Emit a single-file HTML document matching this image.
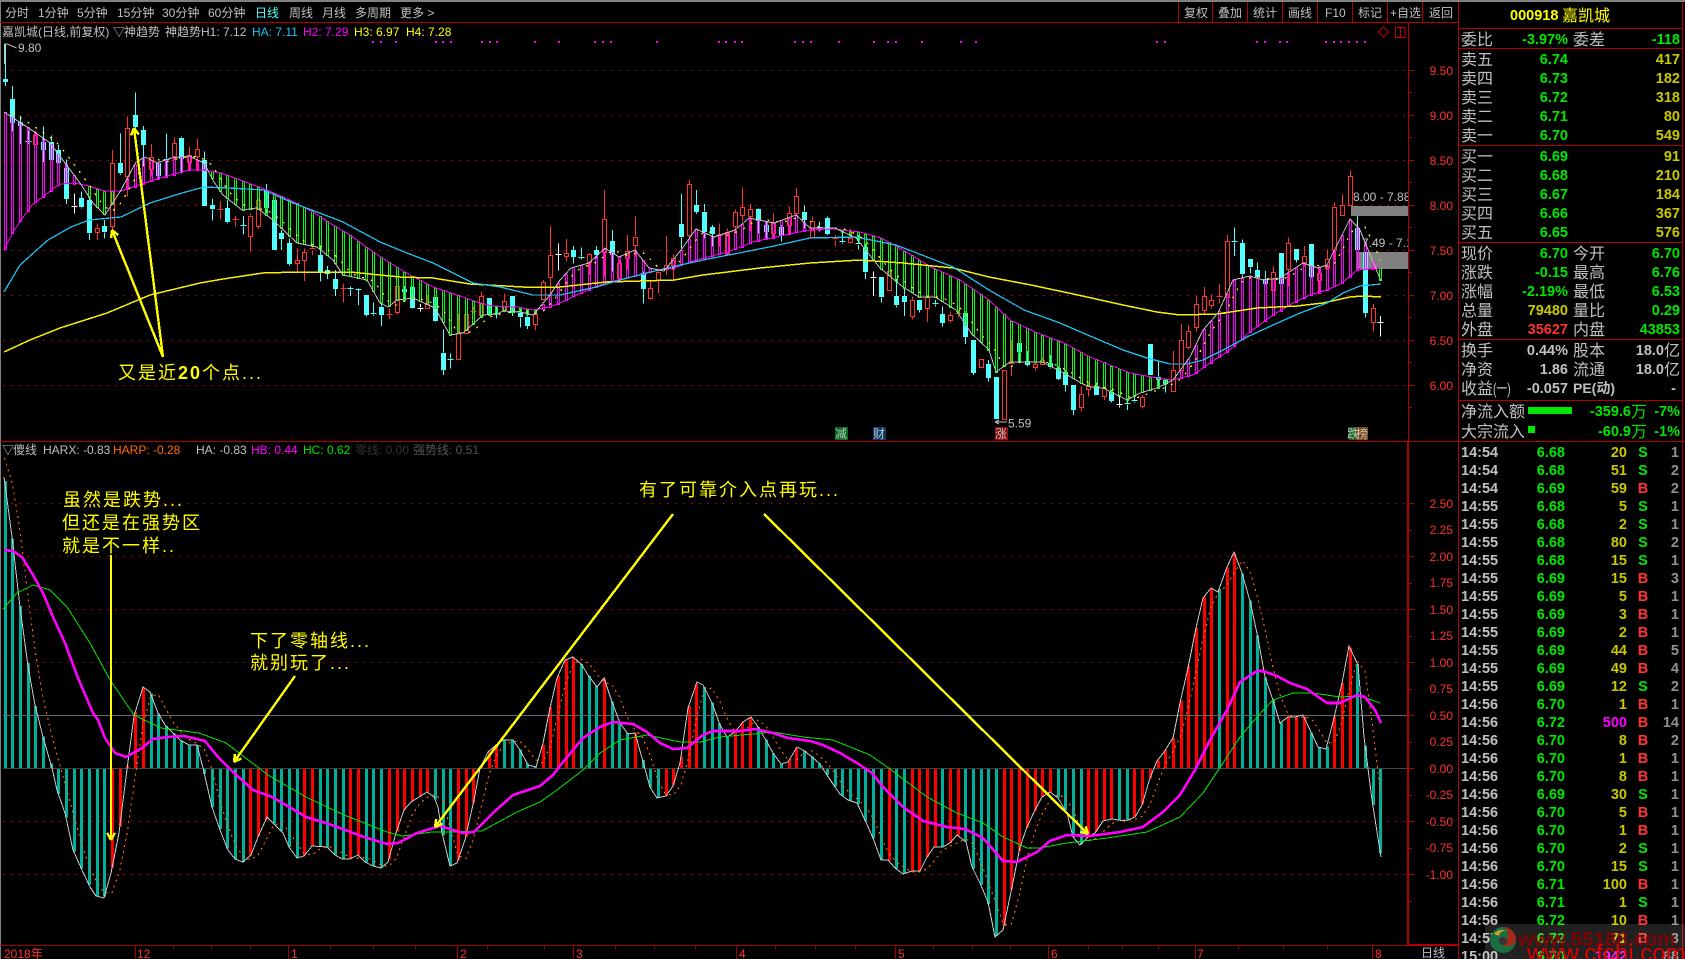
<!DOCTYPE html>
<html lang="zh-CN">
<head>
<meta charset="utf-8">
<title>嘉凯城 000918</title>
<style>
html,body{margin:0;padding:0;background:#000;width:1685px;height:959px;overflow:hidden}
svg{position:absolute;left:0;top:0;display:block}
text{font-family:"Liberation Sans","WenQuanYi Zen Hei","Noto Sans CJK SC",sans-serif;font-size:12px;fill:#c0c0c0}
.ax{fill:#ff3232;text-anchor:end}
.l{font-size:16px}
.n{font-size:14.5px;font-weight:bold;text-anchor:end}
.g{fill:#00e600}.y{fill:#c8c800}.r{fill:#ff3232}.w{fill:#c0c0c0}
.t{font-size:14.5px;font-weight:bold}
.p{font-size:14.5px;font-weight:bold;text-anchor:end;fill:#00e600}
.v{font-size:14.5px;font-weight:bold;text-anchor:end;fill:#c8c800}
.s{font-size:14.5px;font-weight:bold;text-anchor:middle;fill:#00e600}
.b{font-size:14.5px;font-weight:bold;text-anchor:middle;fill:#ff3232}
.c{font-size:14.5px;font-weight:bold;text-anchor:end;fill:#909090}
.a{font-size:18px;letter-spacing:2px;fill:#ffff00}
</style>
</head>
<body>
<svg xmlns="http://www.w3.org/2000/svg" width="1685" height="959" viewBox="0 0 1685 959">
<rect width="1685" height="959" fill="#000"/>
<g id="grid" shape-rendering="crispEdges"></g>
<g shape-rendering="crispEdges">
<rect x="1351" y="206" width="57" height="10" fill="#808080"/>
<rect x="1357" y="252" width="51" height="17" fill="#808080"/>
</g>
<g id="candles" shape-rendering="crispEdges"></g>
<g id="hollow" shape-rendering="crispEdges"></g>
<g id="ibars" shape-rendering="crispEdges"></g>
<g id="lines" fill="none" shape-rendering="crispEdges"></g>

<!-- frame -->
<g shape-rendering="crispEdges">
<rect x="0" y="0" width="1685" height="2" fill="#808080"/>
<rect x="0" y="0" width="1" height="959" fill="#808080"/>
<rect x="0" y="22" width="1458" height="1" fill="#b00000"/>
<rect x="0" y="441" width="1685" height="1" fill="#b00000"/>
<rect x="1408" y="22" width="1" height="923" fill="#b00000"/>
<rect x="1407" y="441" width="2" height="504" fill="#b00000"/>
<rect x="1458" y="2" width="1" height="957" fill="#b00000"/>
<rect x="1682" y="2" width="1" height="957" fill="#b00000"/>
<rect x="0" y="945" width="1408" height="1" fill="#a00000"/>
<rect x="1407" y="944" width="51" height="2" fill="#b00000"/>
<rect x="1458" y="28" width="225" height="1" fill="#b00000"/>
<rect x="1458" y="48" width="225" height="1" fill="#b00000"/>
<rect x="1458" y="145" width="225" height="1" fill="#b00000"/>
<rect x="1458" y="242" width="225" height="1" fill="#b00000"/>
<rect x="1458" y="339" width="225" height="1" fill="#b00000"/>
<rect x="1458" y="400" width="225" height="1" fill="#b00000"/>
<rect x="1178" y="2" width="1" height="20" fill="#b00000"/>
<rect x="1212" y="2" width="1" height="20" fill="#b00000"/>
<rect x="1247" y="2" width="1" height="20" fill="#b00000"/>
<rect x="1282" y="2" width="1" height="20" fill="#b00000"/>
<rect x="1317" y="2" width="1" height="20" fill="#b00000"/>
<rect x="1352" y="2" width="1" height="20" fill="#b00000"/>
<rect x="1387" y="2" width="1" height="20" fill="#b00000"/>
<rect x="1422" y="2" width="1" height="20" fill="#b00000"/>
<rect x="1528" y="407" width="44" height="7" fill="#00e600"/>
<rect x="1528" y="426" width="7" height="7" fill="#00e600"/>
</g>

<!-- top toolbar -->
<text x="5" y="17">分时</text>
<text x="38" y="17">1分钟</text>
<text x="77" y="17">5分钟</text>
<text x="117" y="17">15分钟</text>
<text x="162" y="17">30分钟</text>
<text x="208" y="17">60分钟</text>
<text x="255" y="17" style="fill:#54ffff">日线</text>
<text x="289" y="17">周线</text>
<text x="322" y="17">月线</text>
<text x="355" y="17">多周期</text>
<text x="400" y="17">更多 &gt;</text>
<text x="1184" y="17">复权</text>
<text x="1218" y="17">叠加</text>
<text x="1253" y="17">统计</text>
<text x="1288" y="17">画线</text>
<text x="1325" y="17">F10</text>
<text x="1358" y="17">标记</text>
<text x="1390" y="17">+自选</text>
<text x="1429" y="17">返回</text>

<!-- price legend -->
<text x="2" y="36">嘉凯城(日线,前复权)</text>
<text x="113" y="36">▽</text>
<text x="124" y="36">神趋势</text>
<text x="165" y="36">神趋势H1: 7.12</text>
<text x="252" y="36" style="fill:#20c0f0">HA: 7.11</text>
<text x="303" y="36" style="fill:#ff00ff">H2: 7.29</text>
<text x="354" y="36" style="fill:#ffff00">H3: 6.97</text>
<text x="406" y="36" style="fill:#ffff00">H4: 7.28</text>
<path d="M1383.5 27l5 5-5 5-5-5z" fill="none" stroke="#c80000"/>
<path d="M1395.5 27.5h9.5v10h-9.5zM1400.5 27.5v10" fill="none" stroke="#c80000"/>

<text x="18" y="52">9.80</text>
<path d="M4.500 44v20M4.500 44h3l9 4" fill="none" stroke="#c0c0c0" stroke-width="1"/>
<text x="1008" y="427.500">5.59</text>
<path d="M995 422h12M995 422l4-2M995 422l4 2" fill="none" stroke="#c0c0c0"/>
<svg x="1353" y="190" width="55" height="15"><text x="0" y="11">8.00 - 7.88</text></svg>
<svg x="1362" y="236" width="46" height="15"><text x="0" y="11">7.49 - 7.12</text></svg>

<!-- flags -->
<g shape-rendering="crispEdges">
<rect x="835" y="427" width="13" height="13" fill="#006a1e"/>
<rect x="873" y="427" width="13" height="13" fill="#0a3a6a"/>
<rect x="995" y="427" width="13" height="13" fill="#8b0f0f"/>
<rect x="1349" y="427" width="7" height="13" fill="#0a6a10"/>
<rect x="1356" y="427" width="12" height="13" fill="#7a4410"/>
</g>
<text x="835" y="438">减</text>
<text x="873" y="438">财</text>
<text x="995" y="438">涨</text>
<text x="1347" y="438" style="letter-spacing:-3px">跌榜</text>

<!-- axis -->
<text class="ax" x="1453" y="75">9.50</text>
<text class="ax" x="1453" y="120">9.00</text>
<text class="ax" x="1453" y="165">8.50</text>
<text class="ax" x="1453" y="210">8.00</text>
<text class="ax" x="1453" y="255">7.50</text>
<text class="ax" x="1453" y="300">7.00</text>
<text class="ax" x="1453" y="345">6.50</text>
<text class="ax" x="1453" y="390">6.00</text>
<text class="ax" x="1453" y="508">2.50</text>
<text class="ax" x="1453" y="534">2.25</text>
<text class="ax" x="1453" y="561">2.00</text>
<text class="ax" x="1453" y="587">1.75</text>
<text class="ax" x="1453" y="614">1.50</text>
<text class="ax" x="1453" y="640">1.25</text>
<text class="ax" x="1453" y="667">1.00</text>
<text class="ax" x="1453" y="693">0.75</text>
<text class="ax" x="1453" y="720">0.50</text>
<text class="ax" x="1453" y="746">0.25</text>
<text class="ax" x="1453" y="773">0.00</text>
<text class="ax" x="1453" y="799">-0.25</text>
<text class="ax" x="1453" y="826">-0.50</text>
<text class="ax" x="1453" y="852">-0.75</text>
<text class="ax" x="1453" y="879">-1.00</text>
<text x="1421" y="957">日线</text>

<!-- indicator legend -->
<text x="2" y="454">▽</text>
<text x="13" y="454">傻线</text>
<text x="43" y="454">HARX: -0.83</text>
<text x="113" y="454" style="fill:#ff6a00">HARP: -0.28</text>
<text x="196" y="454">HA: -0.83</text>
<text x="251" y="454" style="fill:#ff00ff">HB: 0.44</text>
<text x="303" y="454" style="fill:#00e600">HC: 0.62</text>
<text x="355" y="454" style="fill:#333">零线: 0.00</text>
<text x="413" y="454" style="fill:#555">强势线: 0.51</text>

<!-- x axis dates -->
<text class="ax" style="text-anchor:start" x="4" y="958">2018年</text>
<text class="ax" style="text-anchor:start" x="137" y="958">12</text>
<text class="ax" style="text-anchor:start" x="291" y="958">1</text>
<text class="ax" style="text-anchor:start" x="460" y="958">2</text>
<text class="ax" style="text-anchor:start" x="576" y="958">3</text>
<text class="ax" style="text-anchor:start" x="739" y="958">4</text>
<text class="ax" style="text-anchor:start" x="898" y="958">5</text>
<text class="ax" style="text-anchor:start" x="1051" y="958">6</text>
<text class="ax" style="text-anchor:start" x="1197" y="958">7</text>
<text class="ax" style="text-anchor:start" x="1375" y="958">8</text>

<!-- annotations -->
<g id="arrows" fill="none" stroke="#ffff00" stroke-width="2.4" shape-rendering="crispEdges"></g>
<text class="a" x="63" y="506">虽然是跌势...</text>
<text class="a" x="62" y="529">但还是在强势区</text>
<text class="a" x="62" y="552">就是不一样..</text>
<text class="a" x="250" y="647">下了零轴线...</text>
<text class="a" x="250" y="669">就别玩了...</text>
<text class="a" x="639" y="496">有了可靠介入点再玩...</text>
<text class="a" x="118" y="379">又是近<tspan font-weight="bold" font-family="Liberation Sans">20</tspan>个点...</text>

<!-- right panel -->
<text x="1510" y="20" style="font-size:14.500px;font-weight:bold;fill:#ffff00">000918</text>
<text x="1562" y="21" style="font-size:16px;fill:#ffff00">嘉凯城</text>

<text class="l" x="1461" y="45">委比</text><text class="n g" x="1568" y="44">-3.97%</text><text class="l" x="1573" y="45">委差</text><text class="n g" x="1680" y="44">-118</text>

<text class="l" x="1461" y="65">卖五</text><text class="n g" x="1568" y="64">6.74</text><text class="n y" x="1680" y="64">417</text>
<text class="l" x="1461" y="84">卖四</text><text class="n g" x="1568" y="83">6.73</text><text class="n y" x="1680" y="83">182</text>
<text class="l" x="1461" y="103">卖三</text><text class="n g" x="1568" y="102">6.72</text><text class="n y" x="1680" y="102">318</text>
<text class="l" x="1461" y="122">卖二</text><text class="n g" x="1568" y="121">6.71</text><text class="n y" x="1680" y="121">80</text>
<text class="l" x="1461" y="141">卖一</text><text class="n g" x="1568" y="140">6.70</text><text class="n y" x="1680" y="140">549</text>

<text class="l" x="1461" y="162">买一</text><text class="n g" x="1568" y="161">6.69</text><text class="n y" x="1680" y="161">91</text>
<text class="l" x="1461" y="181">买二</text><text class="n g" x="1568" y="180">6.68</text><text class="n y" x="1680" y="180">210</text>
<text class="l" x="1461" y="200">买三</text><text class="n g" x="1568" y="199">6.67</text><text class="n y" x="1680" y="199">184</text>
<text class="l" x="1461" y="219">买四</text><text class="n g" x="1568" y="218">6.66</text><text class="n y" x="1680" y="218">367</text>
<text class="l" x="1461" y="238">买五</text><text class="n g" x="1568" y="237">6.65</text><text class="n y" x="1680" y="237">576</text>

<text class="l" x="1461" y="259">现价</text><text class="n g" x="1568" y="258">6.70</text><text class="l" x="1573" y="259">今开</text><text class="n g" x="1680" y="258">6.70</text>
<text class="l" x="1461" y="278">涨跌</text><text class="n g" x="1568" y="277">-0.15</text><text class="l" x="1573" y="278">最高</text><text class="n g" x="1680" y="277">6.76</text>
<text class="l" x="1461" y="297">涨幅</text><text class="n g" x="1568" y="296">-2.19%</text><text class="l" x="1573" y="297">最低</text><text class="n g" x="1680" y="296">6.53</text>
<text class="l" x="1461" y="316">总量</text><text class="n y" x="1568" y="315">79480</text><text class="l" x="1573" y="316">量比</text><text class="n g" x="1680" y="315">0.29</text>
<text class="l" x="1461" y="335">外盘</text><text class="n r" x="1568" y="334">35627</text><text class="l" x="1573" y="335">内盘</text><text class="n g" x="1680" y="334">43853</text>

<text class="l" x="1461" y="356">换手</text><text class="n w" x="1568" y="355">0.44%</text><text class="l" x="1573" y="356">股本</text><text class="n w" x="1664" y="355">18.0</text><text class="l" x="1664" y="356">亿</text>
<text class="l" x="1461" y="375">净资</text><text class="n w" x="1568" y="374">1.86</text><text class="l" x="1573" y="375">流通</text><text class="n w" x="1664" y="374">18.0</text><text class="l" x="1664" y="375">亿</text>
<text class="l" x="1461" y="394">收益</text><text class="l" transform="translate(1493,394) scale(.66,1)">(一)</text><text class="n w" x="1568" y="393">-0.057</text><text x="1573" y="393" style="font-size:14px;font-weight:bold">PE(动)</text><text class="n w" x="1676" y="393">-</text>

<text class="l" x="1461" y="417">净流入额</text><text class="n g" x="1631" y="416">-359.6</text><text class="l" x="1631" y="417" style="fill:#00e600">万</text><text class="n g" x="1680" y="416">-7%</text>
<text class="l" x="1461" y="437">大宗流入</text><text class="n g" x="1631" y="436">-60.9</text><text class="l" x="1631" y="437" style="fill:#00e600">万</text><text class="n g" x="1680" y="436">-1%</text>

<!-- ticks -->
<text class="t" x="1461" y="457">14:54</text><text class="p" x="1565" y="457">6.68</text><text class="v" x="1627" y="457">20</text><text class="s" x="1643" y="457">S</text><text class="c" x="1679" y="457">1</text>
<text class="t" x="1461" y="475">14:54</text><text class="p" x="1565" y="475">6.68</text><text class="v" x="1627" y="475">51</text><text class="s" x="1643" y="475">S</text><text class="c" x="1679" y="475">2</text>
<text class="t" x="1461" y="493">14:54</text><text class="p" x="1565" y="493">6.69</text><text class="v" x="1627" y="493">59</text><text class="b" x="1643" y="493">B</text><text class="c" x="1679" y="493">2</text>
<text class="t" x="1461" y="511">14:55</text><text class="p" x="1565" y="511">6.68</text><text class="v" x="1627" y="511">5</text><text class="s" x="1643" y="511">S</text><text class="c" x="1679" y="511">1</text>
<text class="t" x="1461" y="529">14:55</text><text class="p" x="1565" y="529">6.68</text><text class="v" x="1627" y="529">2</text><text class="s" x="1643" y="529">S</text><text class="c" x="1679" y="529">1</text>
<text class="t" x="1461" y="547">14:55</text><text class="p" x="1565" y="547">6.68</text><text class="v" x="1627" y="547">80</text><text class="s" x="1643" y="547">S</text><text class="c" x="1679" y="547">2</text>
<text class="t" x="1461" y="565">14:55</text><text class="p" x="1565" y="565">6.68</text><text class="v" x="1627" y="565">15</text><text class="s" x="1643" y="565">S</text><text class="c" x="1679" y="565">1</text>
<text class="t" x="1461" y="583">14:55</text><text class="p" x="1565" y="583">6.69</text><text class="v" x="1627" y="583">15</text><text class="b" x="1643" y="583">B</text><text class="c" x="1679" y="583">3</text>
<text class="t" x="1461" y="601">14:55</text><text class="p" x="1565" y="601">6.69</text><text class="v" x="1627" y="601">5</text><text class="b" x="1643" y="601">B</text><text class="c" x="1679" y="601">1</text>
<text class="t" x="1461" y="619">14:55</text><text class="p" x="1565" y="619">6.69</text><text class="v" x="1627" y="619">3</text><text class="b" x="1643" y="619">B</text><text class="c" x="1679" y="619">1</text>
<text class="t" x="1461" y="637">14:55</text><text class="p" x="1565" y="637">6.69</text><text class="v" x="1627" y="637">2</text><text class="b" x="1643" y="637">B</text><text class="c" x="1679" y="637">1</text>
<text class="t" x="1461" y="655">14:55</text><text class="p" x="1565" y="655">6.69</text><text class="v" x="1627" y="655">44</text><text class="b" x="1643" y="655">B</text><text class="c" x="1679" y="655">5</text>
<text class="t" x="1461" y="673">14:55</text><text class="p" x="1565" y="673">6.69</text><text class="v" x="1627" y="673">49</text><text class="b" x="1643" y="673">B</text><text class="c" x="1679" y="673">4</text>
<text class="t" x="1461" y="691">14:55</text><text class="p" x="1565" y="691">6.69</text><text class="v" x="1627" y="691">12</text><text class="s" x="1643" y="691">S</text><text class="c" x="1679" y="691">2</text>
<text class="t" x="1461" y="709">14:56</text><text class="p" x="1565" y="709">6.70</text><text class="v" x="1627" y="709">1</text><text class="b" x="1643" y="709">B</text><text class="c" x="1679" y="709">1</text>
<text class="t" x="1461" y="727">14:56</text><text class="p" x="1565" y="727">6.72</text><text class="v" x="1627" y="727" style="fill:#ff00ff">500</text><text class="b" x="1643" y="727">B</text><text class="c" x="1679" y="727">14</text>
<text class="t" x="1461" y="745">14:56</text><text class="p" x="1565" y="745">6.70</text><text class="v" x="1627" y="745">8</text><text class="b" x="1643" y="745">B</text><text class="c" x="1679" y="745">2</text>
<text class="t" x="1461" y="763">14:56</text><text class="p" x="1565" y="763">6.70</text><text class="v" x="1627" y="763">1</text><text class="b" x="1643" y="763">B</text><text class="c" x="1679" y="763">1</text>
<text class="t" x="1461" y="781">14:56</text><text class="p" x="1565" y="781">6.70</text><text class="v" x="1627" y="781">8</text><text class="b" x="1643" y="781">B</text><text class="c" x="1679" y="781">1</text>
<text class="t" x="1461" y="799">14:56</text><text class="p" x="1565" y="799">6.69</text><text class="v" x="1627" y="799">30</text><text class="s" x="1643" y="799">S</text><text class="c" x="1679" y="799">1</text>
<text class="t" x="1461" y="817">14:56</text><text class="p" x="1565" y="817">6.70</text><text class="v" x="1627" y="817">5</text><text class="b" x="1643" y="817">B</text><text class="c" x="1679" y="817">1</text>
<text class="t" x="1461" y="835">14:56</text><text class="p" x="1565" y="835">6.70</text><text class="v" x="1627" y="835">1</text><text class="b" x="1643" y="835">B</text><text class="c" x="1679" y="835">1</text>
<text class="t" x="1461" y="853">14:56</text><text class="p" x="1565" y="853">6.70</text><text class="v" x="1627" y="853">2</text><text class="s" x="1643" y="853">S</text><text class="c" x="1679" y="853">1</text>
<text class="t" x="1461" y="871">14:56</text><text class="p" x="1565" y="871">6.70</text><text class="v" x="1627" y="871">15</text><text class="s" x="1643" y="871">S</text><text class="c" x="1679" y="871">1</text>
<text class="t" x="1461" y="889">14:56</text><text class="p" x="1565" y="889">6.71</text><text class="v" x="1627" y="889">100</text><text class="b" x="1643" y="889">B</text><text class="c" x="1679" y="889">1</text>
<text class="t" x="1461" y="907">14:56</text><text class="p" x="1565" y="907">6.71</text><text class="v" x="1627" y="907">1</text><text class="s" x="1643" y="907">S</text><text class="c" x="1679" y="907">1</text>
<text class="t" x="1461" y="925">14:56</text><text class="p" x="1565" y="925">6.72</text><text class="v" x="1627" y="925">10</text><text class="b" x="1643" y="925">B</text><text class="c" x="1679" y="925">1</text>
<text class="t" x="1461" y="943">14:57</text><text class="p" x="1565" y="943">6.72</text><text class="v" x="1627" y="943">71</text><text class="b" x="1643" y="943">B</text><text class="c" x="1679" y="943">3</text>
<text class="t" x="1461" y="961">15:00</text><text class="p" x="1565" y="961">6.70</text><text class="v" x="1627" y="961" style="fill:#ff00ff">1942</text><text class="c" x="1679" y="961">68</text>

<!-- watermark -->
<rect x="1485" y="924" width="200" height="35" fill="#fff" fill-opacity=".13"/>
<circle cx="1503" cy="940" r="13" fill="#1c6e40"/>
<path d="M1503 927a13 13 0 0 1 13 13a9 9 0 0 1-13 5a6 6 0 0 0 4-8a7 7 0 0 0-4-10z" fill="#a82818"/>
<path d="M1494 934a9 9 0 0 1 12-3a6 6 0 0 0-7 5z" fill="#c8a030"/>
<circle cx="1503" cy="941" r="4" fill="#333"/>
<text x="1518" y="946" style="font-size:20.500px;font-weight:bold;fill:#8a0000;fill-opacity:.85">www.55188.com</text>
<text x="1527" y="961" style="font-size:24px;fill:#e00000">www.cfchi.com</text>
</svg>

<script>
(function(){
var NS='http://www.w3.org/2000/svg';
function E(g,t,a){var e=document.createElementNS(NS,t);for(var k in a)e.setAttribute(k,a[k]);document.getElementById(g).appendChild(e);return e}
function P(s){return s.trim().split(/\s+/).map(function(p){return p.split(',').map(Number)})}
function at(a,x){if(x<=a[0][0])return a[0][1];for(var k=1;k<a.length;k++)if(x<=a[k][0]){var p=a[k-1],q=a[k];return p[1]+(q[1]-p[1])*(x-p[0])/(q[0]-p[0])}return a[a.length-1][1]}
function X(i){return 4.5+7.687*i}
function poly(a,c,w,d){var o={points:a.map(function(p){return p[0].toFixed(1)+','+p[1].toFixed(1)}).join(' '),stroke:c,'stroke-width':w};if(d)o['stroke-dasharray']=d;E('lines','polyline',o)}

var W=P("-30,400 4,477 12,537 20,607 28,666 35,705 43,737 52,768 57,790 65,813 73,850 82,870 90,887 96,896 104,898 111,873 119,833 126,777 134,716 143,687 150,692 158,713 165,725 180,740 189,745 197,745 203,768 212,807 220,830 228,850 235,859 243,862 251,855 258,837 267,817 275,825 283,833 289,847 297,858 304,856 312,846 327,847 335,855 342,859 350,859 358,855 365,862 373,866 381,868 388,862 396,833 404,810 411,802 419,797 427,792 434,797 438,807 442,833 450,866 457,863 465,840 474,800 480,768 488,752 496,745 503,740 513,740 520,750 528,765 536,767 543,743 550,708 557,678 565,660 573,657 582,665 588,675 597,687 604,678 612,702 620,723 628,734 635,733 642,758 650,787 657,798 666,796 673,786 680,763 688,708 697,682 703,685 712,703 720,725 727,737 735,732 743,722 751,717 758,727 767,742 773,753 781,764 788,762 797,747 803,750 812,757 820,764 827,775 835,787 840,794 848,800 857,803 865,820 873,838 881,860 888,860 895,868 903,874 912,871 920,871 927,857 934,847 943,847 950,843 957,835 966,842 972,867 980,883 988,902 995,937 1003,930 1012,887 1020,847 1027,827 1035,810 1042,797 1050,792 1058,798 1067,813 1073,837 1080,845 1088,837 1095,833 1103,821 1112,819 1125,821 1135,817 1142,805 1150,778 1157,761 1164,752 1173,738 1180,703 1188,668 1196,628 1203,598 1211,588 1218,592 1227,567 1234,552 1242,573 1250,601 1258,638 1265,677 1273,700 1280,723 1288,717 1295,717 1303,715 1311,732 1318,747 1326,749 1334,718 1342,683 1349,646 1358,665 1364,737 1372,800 1381,857");
var M=P("4,550 13,551 22,557 33,575 43,593 53,617 65,643 78,678 93,713 98,720 105,738 115,753 126,757 142,748 153,739 168,737 184,736 205,741 218,757 233,772 253,790 272,797 291,808 306,817 329,824 364,837 387,844 398,843 417,833 440,826 463,833 474,832 494,812 513,795 540,786 553,775 563,762 583,738 600,727 613,722 633,724 647,732 660,743 673,749 687,748 703,735 713,731 740,731 755,729 773,733 788,738 810,741 823,745 840,753 857,763 872,773 883,787 903,807 923,821 947,827 965,829 983,838 1003,861 1017,862 1037,852 1050,841 1067,835 1090,836 1120,832 1143,827 1163,812 1180,795 1195,770 1210,740 1227,710 1240,682 1257,671 1263,671 1277,676 1290,683 1307,689 1327,703 1340,703 1357,695 1365,697 1375,710 1381,723");
var G=P("3,609 17,593 33,585 50,590 67,607 90,643 110,680 134,715 161,728 199,733 226,743 268,775 306,797 344,815 387,832 402,836 432,832 455,832 482,831 517,812 540,802 557,790 583,770 600,753 620,740 647,735 680,742 700,742 720,737 753,734 773,732 803,737 833,740 870,755 890,769 927,797 957,813 983,823 1003,837 1027,848 1040,848 1067,843 1107,838 1147,832 1180,817 1203,793 1223,763 1240,737 1257,717 1273,700 1293,693 1313,693 1340,697 1360,696 1380,703");
var PP=P("4,250 12.5,233 21,220 32,205 43,197 54,188 61,184 75,183 89,186 104,191 121,191 136,186 154,180 171,175 189,170 204,170 221,173 243,181 267,190 290,200 313,212 333,225 350,235 373,252 390,263 410,275 433,287 457,295 477,302 493,306 517,307 533,310 550,307 560,303 581,293 605,283 631,277 649,272 674,268 696,260 728,252 753,242 789,234 810,230 835,229 860,232 881,238 903,250 931,267 960,280 989,300 1010,320 1035,332 1064,343 1090,357 1110,365 1130,373 1157,378 1172,380 1193,375 1210,363 1227,352 1250,332 1273,315 1293,303 1310,295 1327,290 1342,283 1357,270 1381,268");
var WP=P("4,112 21,123 36,133 50,143 68,167 80,183 93,203 105,215 121,190 136,162 145,157 157,163 171,158 189,156 204,163 214,182 223,195 242,210 257,208 273,220 297,243 317,247 333,260 343,275 367,280 380,303 388,307 397,300 413,298 435,308 450,335 463,333 483,315 497,314 503,311 520,312 533,315 550,295 560,280 571,268 589,263 605,248 619,257 635,250 649,268 664,271 681,250 696,229 714,237 735,230 749,218 774,223 796,215 810,228 835,228 856,238 880,268 903,287 919,297 935,297 956,310 971,333 989,350 996,372 1010,362 1042,362 1064,373 1081,383 1090,387 1103,388 1127,400 1140,393 1157,388 1173,380 1190,357 1203,330 1218,313 1233,280 1250,276 1263,280 1280,278 1303,263 1318,268 1327,265 1350,219 1360,230 1381,281");
var CY=P("4,292 20,265 48,240 71,227 89,220 121,217 150,203 182,193 204,187 229,188 264,190 293,203 317,212 343,222 380,242 407,253 433,263 453,273 473,283 500,287 533,295 560,295 596,287 631,277 667,268 703,260 739,253 774,246 810,238 856,237 896,245 953,267 989,290 1024,310 1060,323 1090,336 1123,350 1147,358 1170,364 1187,364 1203,360 1223,350 1247,337 1273,325 1300,313 1327,303 1343,293 1360,286 1381,284");
var YL=P("4,352 30,340 60,328 107,313 150,295 200,283 223,279 263,273 300,272 350,272 400,277 433,278 470,284 523,287 560,287 606,282 674,280 703,275 760,268 810,263 860,260 903,263 953,268 989,277 1031,285 1078,295 1123,305 1157,312 1180,315 1217,314 1257,308 1297,306 1323,303 1350,297 1363,296 1381,297");

/* grid */
[70,115,160,205,250,295,340,385,503,556,609,662,715,768,821,874].forEach(function(y){
 E('grid','line',{x1:3,x2:1408,y1:y+.5,y2:y+.5,stroke:'#a00000','stroke-dasharray':'2 6'});
 E('grid','line',{x1:1409,x2:1414,y1:y+.5,y2:y+.5,stroke:'#b00000'});
});
[92,137,182,227,272,317,362,407,530,583,636,689,742,795,848,901].forEach(function(y){E('grid','line',{x1:1409,x2:1412,y1:y+.5,y2:y+.5,stroke:'#b00000'})});
/* date ticks */
[135,288,457,573,736,895,1048,1195,1372].forEach(function(x){E('grid','line',{x1:x+.5,x2:x+.5,y1:945,y2:959,stroke:'#a00000'})});
[173,211,250,330,373,415,487,544,615,654,695,775,815,855,933,972,1010,1088,1122,1158,1238,1283,1327].forEach(function(x){E('grid','line',{x1:x+.5,x2:x+.5,y1:945,y2:949,stroke:'#a00000'})});
/* dots */
[346,354,368,405,411,419,448,455,462,497,519,553,560,568,610,668,675,683,690,739,746,754,780,812,825,833,857,893,907,1076,1083,1169,1176,1190,1197,1233,1240,1247,1254,1262,1269].forEach(function(x){E('grid','rect',{x:Math.round(x*1.0746),y:41,width:2,height:2,fill:'#ff00ff'})});

/* candles */
function sec(start,o,s){var a=s.trim().split(/\s*;\s*/);a.forEach(function(r,n){if(!r)return;var f=r.trim().split(/\s+/),k=f[0],t=f[1]/3+o,b=f[2]/3+o,h=f[3]/3+o,l=f[4]/3+o,c=X(start+n),m=Math.round(c),x=m+.5,col=k=='c'?'#54ffff':k=='r'?'#ff3232':'#ffffff';
 E('candles','line',{x1:x,x2:x,y1:h,y2:t,stroke:col});E('candles','line',{x1:x,x2:x,y1:b,y2:l,stroke:col});
 if(b-t<2.5){E('candles','line',{x1:x-3,x2:x+3,y1:Math.round(t)+.5,y2:Math.round(t)+.5,stroke:col})}
 else if(k=='c'){E('candles','rect',{x:m-2,y:Math.round(t),width:5,height:Math.round(b-t),fill:col})}
 else{E('candles','rect',{x:m-1.5,y:Math.round(t)+.5,width:4,height:Math.round(b-t),fill:'#000',stroke:col})}
})}
sec(0,0,"c 237 245 130 258;c 297 368 258 395;c 366 378 348 432;c 422 428 392 432;r 405 433 393 435;c 425 450 380 488;c 425 480 407 480;c 450 490 435 492;c 503 597 478 612;w 617 620 580 640;c 595 622 575 625;c 600 700 590 720;r 685 697 670 720;c 678 697 660 715;r 490 680 450 690;c 490 520 400 525;r 385 530 350 590;c 345 380 277 410;c 390 435 378 500;r 470 505 432 530;c 490 530 485 535;c 476 480 400 530;r 430 468 412 480;c 413 475 410 520;r 465 485 440 510;r 447 467 415 510");
sec(26,180,"c -60 78 -85 78;c 75 88 57 122;r 87 91 63 118;c 85 128 60 130;r 117 121 108 140;c 135 139 108 163;r 107 167 100 215;r 60 137 55 147;c 30 85 12 100;c 60 210 60 210;c 160 177 150 210;c 190 252 175 257;r 240 250 205 278;r 217 242 205 303;r 205 212 195 225;c 225 275 200 305;c 270 282 258 297;c 297 327 270 348;r 324 327 310 368;c 325 329 320 348;c 327 330 325 375;c 345 405 345 410;c 400 403 368 408;c 380 405 368 438;r 402 405 385 417;r 318 395 318 404;c 327 335 318 358;c 320 384 318 385;w 383 386 372 395;r 372 384 345 384;c 350 423 350 425;c 518 570 448 585;c 536 540 520 565;r 460 538 400 538;r 402 458 402 458;r 392 395 380 400;r 348 406 335 410;c 355 404 355 404;c 400 403 380 415;r 363 390 340 395;c 348 398 348 408;c 400 413 385 442;c 410 438 385 447;r 403 432 390 450;r 307 358 300 362;r 225 292 138 350;w 222 225 190 272");
sec(73,160,"r 280 290 237 305;c 270 290 258 310;c 290 293 262 298;r 283 307 280 345;c 270 285 258 295;r 178 278 90 350;c 243 285 210 335;r 310 355 300 360;r 272 292 225 330;r 230 255 170 290;c 340 387 335 430;r 385 415 360 418;r 335 360 325 400;r 315 328 228 345;r 293 315 282 360;c 193 232 102 265;r 73 225 60 240;c 135 155 90 162;c 155 215 132 235;c 202 222 195 260;r 225 230 190 260;r 215 280 205 285;r 157 200 148 220;r 142 165 83 185;r 148 168 132 215;c 148 183 145 220;c 195 215 185 235;r 190 220 160 235;c 200 228 195 245;r 160 195 140 220;r 108 158 82 165;c 155 178 137 205;r 182 230 170 232;c 200 205 185 215;c 175 222 170 225;r 235 242 225 260;c 244 248 215 250;r 235 248 205 250;c 250 255 225 268;c 262 338 250 357;w 352 355 335 408;c 352 413 352 428;r 332 388 332 390;c 408 436 355 442;c 408 426 385 468;r 420 468 410 478;c 420 450 420 458;r 410 443 410 486;c 430 434 420 440;c 462 488 440 500;r 466 480 455 488;r 459 466 448 472;c 458 530 455 552;c 540 638 540 645;r 598 622 598 626;c 612 653 600 665;c 652 778 652 778;r 630 778 630 778;r 608 615 540 648;c 550 578 550 605;c 603 615 573 620;r 612 622 605 632;r 600 612 593 615;c 610 622 585 625;c 625 657 620 660;c 635 675 630 695;c 675 750 675 765;r 703 742 680 755;r 678 688 668 710;c 677 703 668 705;r 685 710 680 720;c 695 723 690 728;w 733 736 705 742");
sec(146,160,"c 730 733 715 750;c 720 724 705 728;r 712 738 705 745;c 553 645 553 645;c 650 658 605 680;c 660 672 655 698;r 630 692 573 692;r 541 630 492 632;r 514 563 495 568;r 433 503 410 515;r 408 450 381 462;r 420 434 403 445;r 408 415 372 430;r 244 412 225 412;c 243 247 202 288;c 249 343 238 352;c 297 322 297 340;c 330 350 307 357;c 358 373 333 375;r 337 392 318 392;c 280 372 280 372;r 250 328 232 380;c 267 300 267 308;r 287 305 258 320;c 252 352 252 355;r 340 362 318 398;r 298 325 268 330;r 140 268 127 300;r 136 165 102 168;r 49 137 32 137;c 205 272 168 272;c 276 458 276 473;r 445 488 432 515;w 487 490 468 530");

/* hollow bars between white line and magenta line */
for(var i=0;i<180;i++){var x=X(i),a=at(WP,x),b=at(PP,x);if(Math.abs(a-b)<1.5)continue;
 var c=a<b?'#ff00ff':'#00ff00',top=Math.min(a,b),h=Math.abs(a-b),rx=Math.round(x)-.5;
 E('hollow','rect',{x:rx,y:Math.round(top)+.5,width:2,height:Math.round(h),fill:'none',stroke:c})}

/* indicator bars */
var runs=[['t',14],['r',5],['t',13],['r',3],['t',4],['r',2],['t',4],['r',2],['t',3],['r',6],['t',3],['r',6],['t',5],['r',5],['t',3],['r',1],['t',3],['r',1],['t',3],['r',5],['t',4],['r',3],['t',4],['r',2],['t',11],['r',1],['t',2],['r',4],['t',1],['r',2],['t',5],['r',7],['t',4],['r',4],['t',2],['r',11],['t',1],['r',2],['t',6],['r',3],['t',3],['r',3],['t',4]];
var cols=[];runs.forEach(function(r){for(var k=0;k<r[1];k++)cols.push(r[0])});
for(i=0;i<180;i++){x=X(i);var y=at(W,x);E('ibars','rect',{x:Math.round(x)-1,y:Math.min(y,768),width:3,height:Math.abs(y-768),fill:cols[i]=='r'?'#ff0000':'#00b09a'})}

/* gray level lines */
E('ibars','rect',{x:3,y:715,width:1405,height:1,fill:'#666'});
E('ibars','rect',{x:3,y:768,width:1405,height:1,fill:'#444'});

/* price lines */
poly(PP,'#ff00ff',1);
poly(YL,'#f4f000',1.5);
poly(CY,'#20c0f0',1.3);
var yd=[];for(i=1;i<180;i++){x=X(i);yd.push([x,(at(WP,x-12)+at(WP,x-8)+at(WP,x-4))/3])}
poly(yd,'#ffff00',1.2,'2 7');
poly(WP,'#c0c0c0',1);

/* indicator lines */
var od=[];for(i=0;i<180;i++){x=X(i);od.push([x,(at(W,x-15)+at(W,x-8)+at(W,x-4))/3]);}
poly(od,'#ff6a00',1.1,'2 4');
poly(W.slice(1),'#c8c8c8',1);
poly(G,'#00e600',1);
poly(M,'#ff00ff',2.6);

/* arrows */
function arrow(x1,y1,x2,y2){E('arrows','line',{x1:x1,y1:y1,x2:x2,y2:y2});var t=Math.atan2(y1-y2,x1-x2),L=8;
 [-.5,.5].forEach(function(d){E('arrows','line',{x1:x2,y1:y2,x2:x2+L*Math.cos(t+d),y2:y2+L*Math.sin(t+d)})})}
arrow(163,357,112,230);
arrow(163,357,134,128);
arrow(111,555,111,840);
arrow(295,676,234,762);
arrow(673,514,435,827);
arrow(764,514,1088,834);
})();
</script>
</body>
</html>
